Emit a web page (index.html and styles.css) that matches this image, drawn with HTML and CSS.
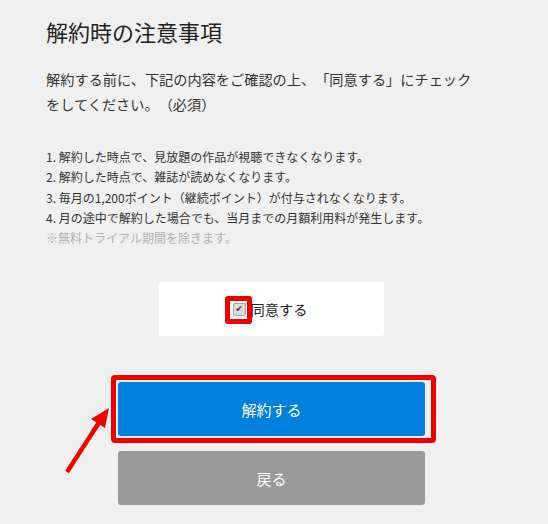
FILE: index.html
```html
<!DOCTYPE html>
<html lang="ja">
<head>
<meta charset="utf-8">
<link rel="stylesheet" href="styles.css">
</head>
<body>
<div class="page">
  <h1 class="title">解約時の注意事項</h1>
  <p class="lead">解約する前に、下記の内容をご確認の上、「同意する」にチェック<br>をしてください。（必須）</p>
  <ol class="notes">
    <li>1. 解約した時点で、見放題の作品が視聴できなくなります。</li>
    <li>2. 解約した時点で、雑誌が読めなくなります。</li>
    <li>3. 毎月の1,200ポイント（継続ポイント）が付与されなくなります。</li>
    <li>4. 月の途中で解約した場合でも、当月までの月額利用料が発生します。</li>
    <li class="muted">※無料トライアル期間を除きます。</li>
  </ol>
  <div class="agree-box">
    <label class="agree">
      <span class="check-wrap">
        <span class="checkbox">✔</span>
        <span class="hl-check"></span>
      </span>
      <span class="agree-text">同意する</span>
    </label>
  </div>
  <div class="actions">
    <div class="btn-wrap">
      <button class="btn btn-primary">解約する</button>
      <span class="hl-btn"></span>
      <svg class="arrow" width="60" height="80" viewBox="0 0 60 80">
        <line x1="7" y1="73" x2="40" y2="22" stroke="#f00000" stroke-width="4.5" stroke-linecap="butt"/>
        <polygon points="49,9 45,29 31,20" fill="#f00000"/>
      </svg>
    </div>
    <button class="btn btn-back">戻る</button>
  </div>
</div>
</body>
</html>
```
FILE: styles.css
```css
html, body {
  margin: 0;
  padding: 0;
  background: #f0f0f0;
}
body {
  font-family: "Noto Sans CJK JP", "Noto Sans", sans-serif;
  color: #333;
  text-spacing-trim: space-all;
}
.page {
  width: 451px;
  padding: 15px 0 0 46px;
}
.title {
  margin: 0;
  font-size: 22px;
  line-height: 32px;
  font-weight: normal;
  color: #222;
}
.lead {
  margin: 20px 0 0;
  font-size: 14.2px;
  line-height: 25px;
  color: #333;
  white-space: nowrap;
}
.notes {
  list-style: none;
  margin: 30px 0 0;
  padding: 0;
  font-size: 12px;
  line-height: 20.3px;
  color: #333;
}
.notes .muted {
  color: #b0b0b0;
}
.agree-box {
  margin: 34px auto 0;
  width: 225px;
  height: 54px;
  background: #fff;
  border-radius: 3px;
  display: flex;
  align-items: center;
  justify-content: center;
}
.agree {
  display: flex;
  align-items: center;
  gap: 5px;
  margin-left: -3px;
}
.check-wrap {
  position: relative;
  width: 13px;
  height: 13px;
}
.checkbox {
  display: flex;
  width: 11px;
  height: 11px;
  border: 1px solid #a8a8a8;
  border-radius: 2px;
  background: #dcdcdc;
  color: #333;
  font-size: 9px;
  line-height: 11px;
  align-items: center;
  justify-content: center;
  font-family: "DejaVu Sans", sans-serif;
}
.hl-check {
  position: absolute;
  left: -8px;
  top: -7px;
  width: 17px;
  height: 18px;
  border: 5px solid #f00000;
  border-radius: 3px;
}
.agree-text {
  font-size: 14.2px;
  color: #222;
}
.actions {
  margin-top: 46px;
  display: flex;
  flex-direction: column;
  align-items: center;
  gap: 15px;
}
.btn-wrap {
  position: relative;
}
.btn {
  display: block;
  width: 307px;
  height: 54px;
  border: 0;
  border-radius: 3px;
  color: #fff;
  font-family: "Noto Sans CJK JP", "Noto Sans", sans-serif;
  font-size: 15px;
  padding: 0;
}
.btn-primary {
  background: #0080de;
}
.btn-back {
  background: #9a9a9a;
}
.hl-btn {
  position: absolute;
  left: -7px;
  right: -11px;
  top: -7px;
  bottom: -7px;
  border: 5px solid #f00000;
  border-radius: 4px;
}
.arrow {
  position: absolute;
  left: -58px;
  top: 17px;
}
```
